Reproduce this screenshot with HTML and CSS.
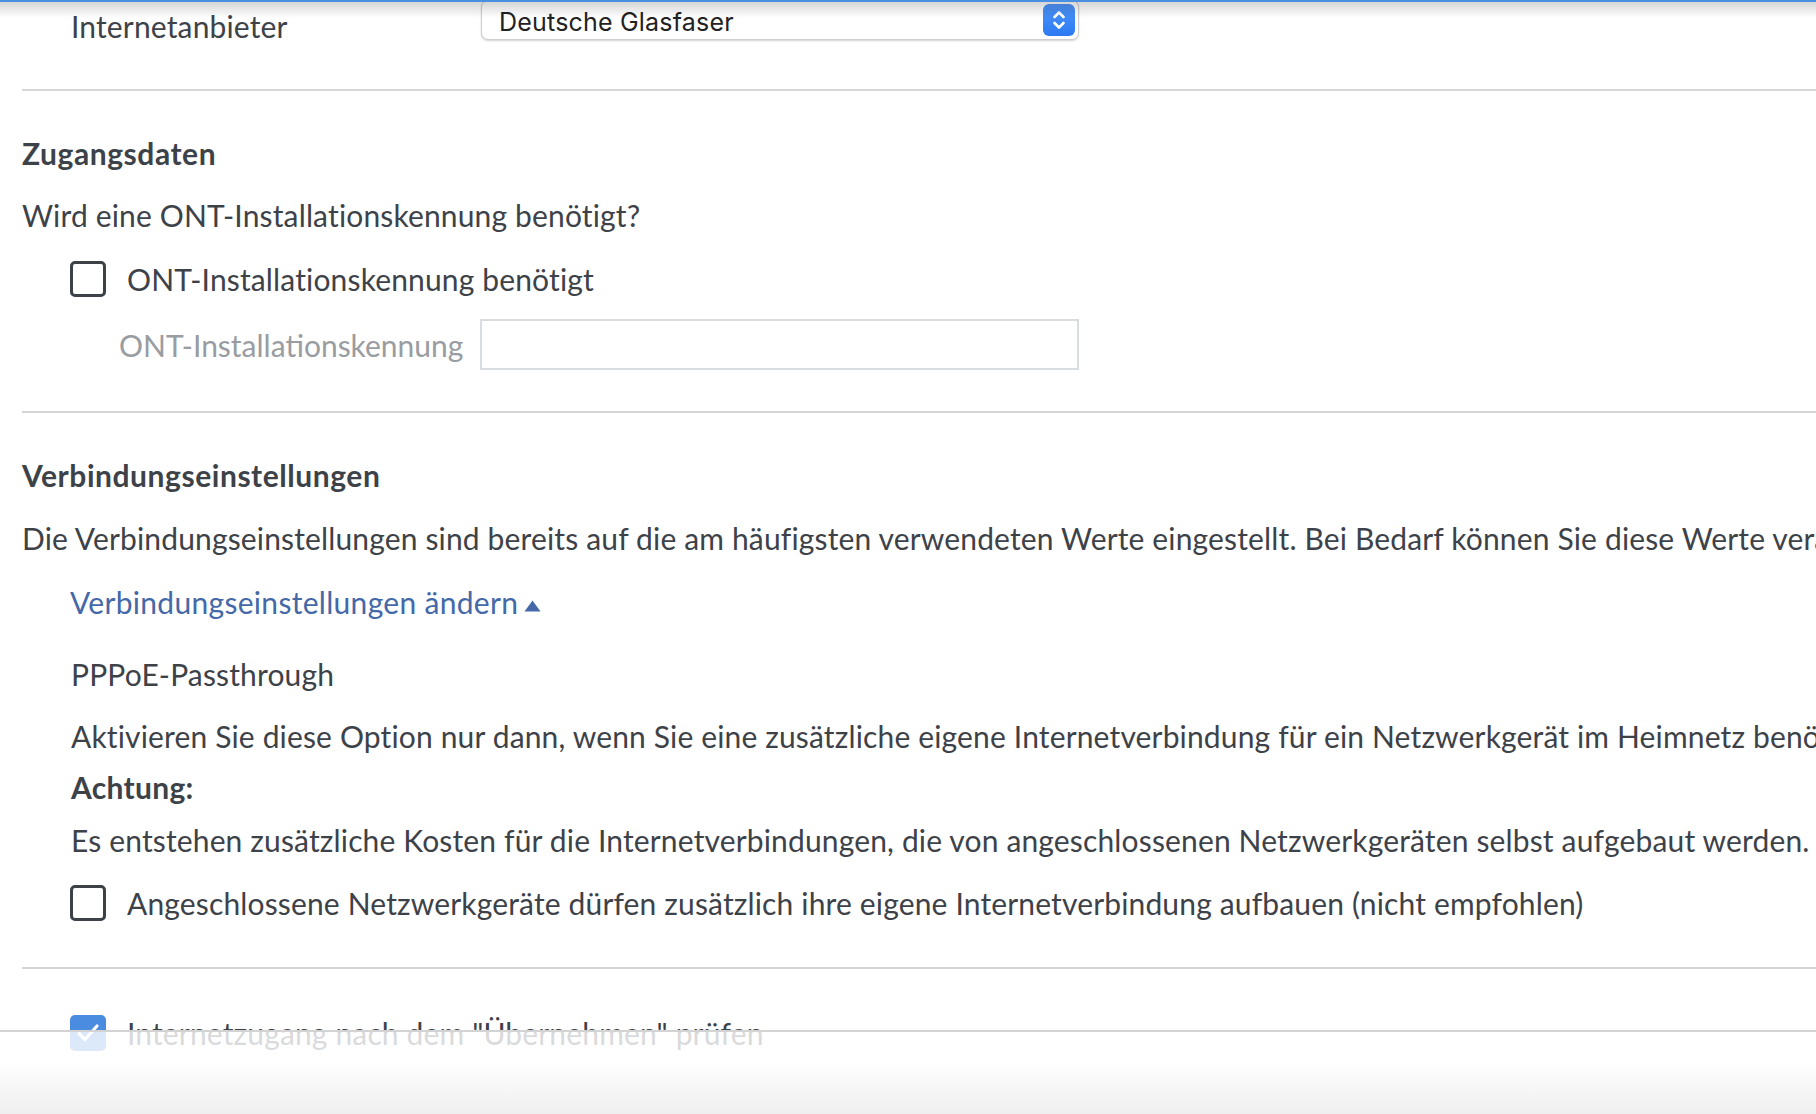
FILE: index.html
```html
<!DOCTYPE html>
<html lang="de">
<head>
<meta charset="utf-8">
<title>Internetzugang</title>
<link rel="stylesheet" href="styles.css">
</head>
<body>
<main class="page">
  <section class="sec sec-top">
    <div class="field-row">
      <span class="field-label">Internetanbieter</span>
      <div class="select">
        <span class="select-text">Deutsche Glasfaser</span>
        <span class="stepper">
          <svg width="32" height="32" viewBox="0 0 32 32" aria-hidden="true">
            <path d="M11.5 13 L16 8.5 L20.5 13" fill="none" stroke="#fff" stroke-width="2.6" stroke-linecap="round" stroke-linejoin="round"/>
            <path d="M11.5 19 L16 23.5 L20.5 19" fill="none" stroke="#fff" stroke-width="2.6" stroke-linecap="round" stroke-linejoin="round"/>
          </svg>
        </span>
      </div>
    </div>
  </section>

  <section class="sec sec-access">
    <h2 class="sec-title">Zugangsdaten</h2>
    <p class="txt txt-q">Wird eine ONT-Installationskennung benötigt?</p>
    <label class="check-row check-ont"><span class="cb"></span><span class="check-text">ONT-Installationskennung benötigt</span></label>
    <div class="input-row">
      <span class="input-label">ONT-Installationskennung</span>
      <span class="input"></span>
    </div>
  </section>

  <section class="sec sec-conn">
    <h2 class="sec-title">Verbindungseinstellungen</h2>
    <p class="txt txt-intro">Die Verbindungseinstellungen sind bereits auf die am häufigsten verwendeten Werte eingestellt. Bei Bedarf können Sie diese Werte verändern.</p>
    <a class="toggle-link">Verbindungseinstellungen ändern<svg class="tri" width="17" height="12" viewBox="0 0 17 12" aria-hidden="true"><path d="M8.5 0.5 L16.5 11.5 L0.5 11.5 Z" fill="#4468a8"/></svg></a>
    <p class="txt indent t-pppoe">PPPoE-Passthrough</p>
    <p class="txt indent t-act">Aktivieren Sie diese Option nur dann, wenn Sie eine zusätzliche eigene Internetverbindung für ein Netzwerkgerät im Heimnetz benötigen.</p>
    <p class="txt indent strong t-warn">Achtung:</p>
    <p class="txt indent t-cost">Es entstehen zusätzliche Kosten für die Internetverbindungen, die von angeschlossenen Netzwerkgeräten selbst aufgebaut werden.</p>
    <label class="check-row check-pass"><span class="cb"></span><span class="check-text">Angeschlossene Netzwerkgeräte dürfen zusätzlich ihre eigene Internetverbindung aufbauen (nicht empfohlen)</span></label>
  </section>

  <section class="sec sec-last">
    <label class="check-row"><span class="cb cb-on"><svg width="36" height="36" viewBox="0 0 36 36" aria-hidden="true"><path d="M9 18.5 L15 24.5 L27 11" fill="none" stroke="#fff" stroke-width="3.2" stroke-linecap="round" stroke-linejoin="round"/></svg></span><span class="check-text">Internetzugang nach dem "Übernehmen" prüfen</span></label>
  </section>
</main>

<div class="topbar"></div>
<footer class="footer"></footer>
</body>
</html>
```

FILE: styles.css
```css
html, body {
  margin: 0;
  padding: 0;
  background: #ffffff;
  overflow: hidden;
  width: 1816px;
  height: 1114px;
}

body {
  font-family: "Lato", "Open Sans", "Noto Sans", sans-serif;
  font-size: 30px;
  line-height: 36px;
  letter-spacing: 0.15px;
  color: #3d4249;
}

.page {
  width: 1816px;
}

.sec {
  margin-left: 22px;
  border-bottom: 2px solid #d5d5d5;
  padding-top: 44px;
}

.sec-top {
  padding-top: 0;
  padding-bottom: 45px;
}

.sec-access {
  padding-bottom: 41px;
}

.sec-conn {
  padding-bottom: 46px;
}

.sec-last {
  border-bottom: none;
  padding-top: 46px;
  padding-bottom: 80px;
}

.field-row {
  display: flex;
  align-items: flex-start;
}

.field-label {
  margin-left: 49px;
  width: 410px;
  margin-top: 8px;
  white-space: nowrap;
}

.select {
  box-sizing: border-box;
  width: 598px;
  height: 40px;
  border: 1px solid #cfcfcf;
  border-radius: 7px;
  box-shadow: 0 1px 2px rgba(0, 0, 0, 0.18);
  background: #ffffff;
  display: flex;
  align-items: center;
  justify-content: space-between;
  padding: 0 3px 0 17px;
}

.select-text {
  font-family: "Inter", "Liberation Sans", sans-serif;
  font-size: 25px;
  line-height: 38px;
  padding-top: 3px;
  color: #222222;
  letter-spacing: 0.2px;
}

.stepper {
  width: 32px;
  height: 32px;
  border-radius: 6px;
  background: linear-gradient(#4f95f8, #2c79f3);
  display: flex;
}

.sec-title {
  margin: 0;
  font-size: 30px;
  line-height: 36px;
  font-weight: 700;
  letter-spacing: 0.55px;
}

.txt {
  margin: 0;
  white-space: nowrap;
}

.strong {
  font-weight: 700;
  letter-spacing: 0.3px;
}

.indent {
  margin-left: 49px;
}

.txt-q { margin-top: 26px; }
.txt-intro { margin-top: 27px; }
.t-pppoe { margin-top: 36px; }
.t-act { margin-top: 26px; }
.t-warn { margin-top: 15px; }
.t-cost { margin-top: 17px; }

.toggle-link {
  display: flex;
  align-items: center;
  margin-top: 28px;
  margin-left: 48px;
  color: #4468a8;
  white-space: nowrap;
  letter-spacing: 0.3px;
}

.tri {
  margin-left: 6px;
  margin-top: 8px;
}

.check-row {
  display: flex;
  align-items: flex-start;
  margin-left: 48px;
  white-space: nowrap;
}

.check-ont { margin-top: 28px; }
.check-pass { margin-top: 27px; }

.cb {
  box-sizing: border-box;
  flex: none;
  width: 36px;
  height: 36px;
  border: 3px solid #3d4249;
  border-radius: 5px;
  background: #ffffff;
}

.cb-on {
  border: none;
  background: #4a8cdf;
  display: flex;
}

.check-text {
  margin-left: 21px;
}

.input-row {
  display: flex;
  align-items: center;
  margin-top: 22px;
}

.input-label {
  margin-left: 97px;
  width: 361px;
  color: #999ca1;
  white-space: nowrap;
  letter-spacing: 0;
}

.input {
  box-sizing: border-box;
  width: 599px;
  height: 51px;
  border: 2px solid #d9dcdf;
  background: #ffffff;
}

.topbar {
  position: fixed;
  top: 0;
  left: 0;
  right: 0;
  height: 16px;
  border-top: 2px solid #4a90e2;
  background: linear-gradient(rgba(0, 0, 0, 0.16), rgba(0, 0, 0, 0));
  pointer-events: none;
}

.footer {
  position: fixed;
  left: 0;
  right: 0;
  bottom: 0;
  height: 82px;
  border-top: 2px solid #d3d3d3;
  background: linear-gradient(rgba(255, 255, 255, 0.8) 0%, rgba(255, 255, 255, 0.82) 35%, rgba(238, 238, 238, 0.96) 100%);
}
```
